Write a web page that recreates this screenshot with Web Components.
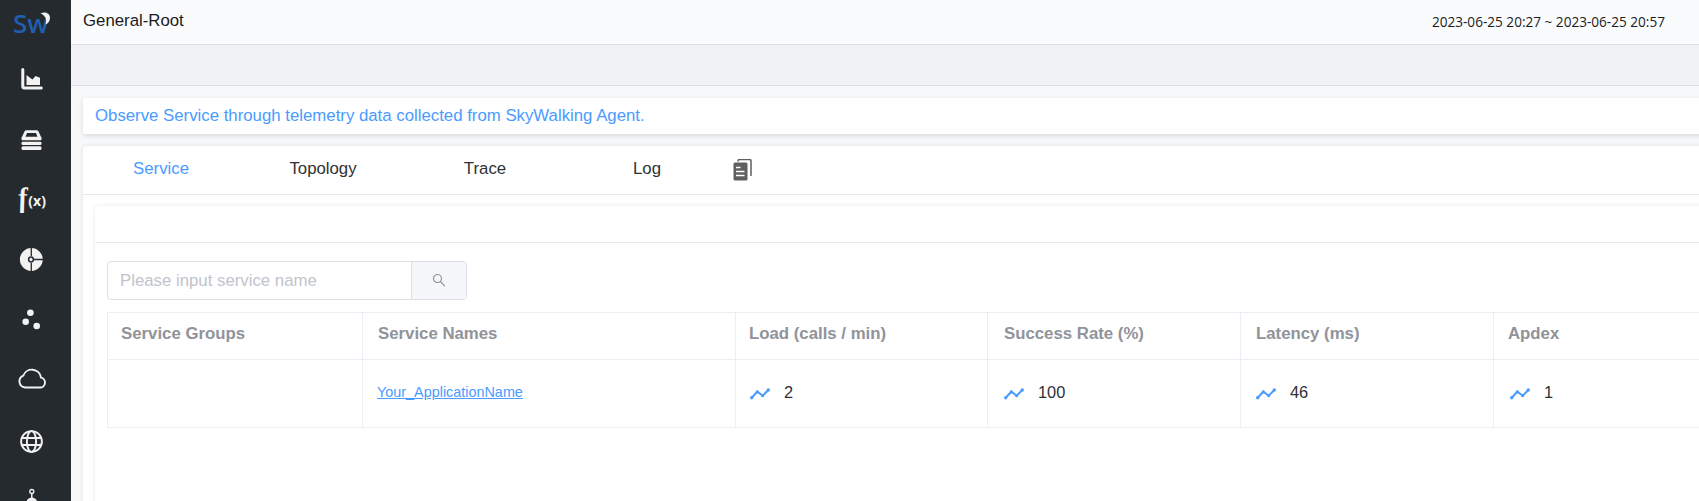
<!DOCTYPE html>
<html>
<head>
<meta charset="utf-8">
<style>
html, body { margin: 0; height: 100%; overflow: hidden; }
body { font: 16.8px "Liberation Sans", Arial, sans-serif; }
</style>
</head>
<body>
<sw-app>
  <sw-sidebar slot="nav"></sw-sidebar>
  <sw-header slot="header" title-text="General-Root" range="2023-06-25 20:27 ~ 2023-06-25 20:57"></sw-header>
  <sw-tip>Observe Service through telemetry data collected from SkyWalking Agent.</sw-tip>
  <sw-card>
    <sw-tabs></sw-tabs>
    <sw-panel>
      <sw-search placeholder="Please input service name"></sw-search>
      <sw-table></sw-table>
    </sw-panel>
  </sw-card>
</sw-app>

<script>
class SwApp extends HTMLElement{
  constructor(){
    super();
    this.attachShadow({ mode: 'open' });
    this.shadowRoot.innerHTML = `
    <style>
      :host{ display: flex; width: 1699px; height: 501px; overflow: hidden; background: #f7f8fa; }
      .main{ flex: 1; min-width: 0; display: flex; flex-direction: column; }
      .bar{ height: 40px; flex: none; background: #f0f2f5; border-bottom: 1px solid #dcdfe6; }
      .content{ width: 1700px; padding: 12px 0 0 12px; display: flex; flex-direction: column; gap: 12px; }
    </style>
    <slot name="nav"></slot>
    <div class="main">
      <slot name="header"></slot>
      <div class="bar"></div>
      <div class="content"><slot></slot></div>
    </div>`;
  }
}

const NAV_ICONS = [
  `<path d="M22.800 69.500v17a1.500 1.500 0 0 0 1.500 1.500h17" fill="none" stroke="#f2f2f2" stroke-width="3" stroke-linecap="round"/><path d="M26.500 85V75l3.500 2.800 2.500 1.700 3-3.500 4.500 1.800V85z" fill="#f2f2f2"/>`,
  `<path d="M21.500 138L24.500 131.500A2 2 0 0 1 26.300 130.300H36.700A2 2 0 0 1 38.500 131.500L41.500 138z" fill="#f2f2f2"/><path d="M25.500 136.800L27 133H36L37.500 136.800z" fill="#252a2f"/><rect x="21.500" y="137" width="20" height="3.200" rx="1" fill="#f2f2f2"/><rect x="21.500" y="141.700" width="20" height="3.300" rx="1.200" fill="#f2f2f2"/><rect x="21.500" y="146.300" width="20" height="3.700" rx="1.500" fill="#f2f2f2"/>`,
  ``,
  `<circle cx="31.300" cy="259.500" r="11.400" fill="#f2f2f2"/><path d="M31.300 247v9M31.300 263v9M33.500 259.500H44" stroke="#252a2f" stroke-width="1.300"/><circle cx="31" cy="259.500" r="2.400" fill="#f2f2f2" stroke="#252a2f" stroke-width="1.500"/>`,
  `<circle cx="30.400" cy="312.800" r="3.300" fill="#f2f2f2"/><circle cx="25.700" cy="321.800" r="3.300" fill="#f2f2f2"/><circle cx="36.700" cy="326" r="3.300" fill="#f2f2f2"/>`,
  `<path d="M25 387.500h15a5 5 0 0 0 1-9.900 9.200 9.200 0 0 0-17.700-2A6.200 6.200 0 0 0 25 387.500z" fill="none" stroke="#f2f2f2" stroke-width="1.900" stroke-linejoin="round"/>`,
  `<g fill="none" stroke="#f2f2f2" stroke-width="1.900"><circle cx="31.500" cy="441.500" r="10.400"/><ellipse cx="31.500" cy="441.500" rx="4.600" ry="10.400"/><path d="M21.500 438h20M21.500 445h20"/></g>`,
  `<circle cx="31.800" cy="491.500" r="2" fill="none" stroke="#f2f2f2" stroke-width="1.300"/><path d="M31.800 493.500v5" stroke="#f2f2f2" stroke-width="1.500"/><circle cx="31.800" cy="503" r="5.500" fill="#f2f2f2"/>`
];

class SwSidebar extends HTMLElement{
  constructor(){
    super();
    this.attachShadow({ mode: 'open' });
    this.shadowRoot.innerHTML = `
    <style>
      :host{ display: block; position: relative; width: 71px; flex: none; height: 501px; background: #252a2f; overflow: hidden; }
      .logo{ height: 46px; display: flex; align-items: center; padding-left: 13px; box-sizing: border-box; color: #1f5fae;
        font: 600 26px/1 "Open Sans", sans-serif; }
      svg.art{ position: absolute; left: 0; top: 0; }
      .fx{ position: absolute; left: 18px; top: 183px; color: #f2f2f2; font: italic 700 28px/30px "Liberation Serif", serif; display: flex; align-items: center; }
      .fx b{ font-weight: 700; transform: skewX(8deg); }
      .fx small{ font: 700 14px/1 "Open Sans", sans-serif; margin-left: 1px; margin-top: 6px; }
    </style>
    <div class="logo">Sw</div>
    <svg class="art" width="71" height="501" viewBox="0 0 71 501">
      <path d="M40.500 13.500c5-2.500 9.800-.2 9.500 4.800-.3 3.500-2.500 5.700-4.500 6.200 1.500-4.500.3-9-5-11z" fill="#f2f2f2"/>
      ${NAV_ICONS.join('')}
    </svg>
    <div class="fx"><b>f</b><small>(x)</small></div>`;
  }
}

class SwHeader extends HTMLElement{
  constructor(){
    super();
    this.attachShadow({ mode: 'open' });
  }
  connectedCallback(){
    this.shadowRoot.innerHTML = `
    <style>
      :host{ display: flex; flex: none; align-items: center; justify-content: space-between; box-sizing: border-box; height: 45px; padding: 0 34px 2px 12px; background: #fafbfc; border-bottom: 1px solid #dcdfe6; color: #1c1c1c; }
      .range{ font: 13.6px "Open Sans", sans-serif; }
    </style>
    <div>${this.getAttribute('title-text')}</div>
    <div class="range">${this.getAttribute('range')}</div>`;
  }
}

class SwTip extends HTMLElement{
  constructor(){
    super();
    this.attachShadow({ mode: 'open' });
    this.shadowRoot.innerHTML = `
    <style>
      :host{ display: block; box-sizing: border-box; height: 36px; line-height: 36px; padding-left: 12px; background: #fff; color: #4a9bff; border-radius: 2px; box-shadow: 0 2px 5px rgba(0,0,0,.12); }
    </style>
    <slot></slot>`;
  }
}

class SwCard extends HTMLElement{
  constructor(){
    super();
    this.attachShadow({ mode: 'open' });
    this.shadowRoot.innerHTML = `
    <style>
      :host{ display: block; background: #fff; border-radius: 4px; box-shadow: 0 0 4px rgba(0,0,0,.1); height: 360px; }
    </style>
    <slot></slot>`;
  }
}

class SwTabs extends HTMLElement{
  constructor(){
    super();
    this.attachShadow({ mode: 'open' });
    const tabs = ['Service', 'Topology', 'Trace', 'Log'];
    this.shadowRoot.innerHTML = `
    <style>
      :host{ display: flex; align-items: center; gap: 22px; box-sizing: border-box; height: 49px; padding: 0 0 2px 8px; border-bottom: 1px solid #e4e7ed; color: #303133; }
      .tab{ width: 140px; text-align: center; }
      .tab.on{ color: #4a9bff; }
      svg{ margin: 2px 0 0 -7px; }
    </style>
    ${tabs.map((t, i) => `<div class="tab ${i === 0 ? 'on' : ''}">${t}</div>`).join('')}
    <svg width="20" height="22" viewBox="0 0 20 22">
      <path d="M5 2V1.500A1.500 1.500 0 0 1 6.500 0h10A1.500 1.500 0 0 1 18 1.500v15" fill="none" stroke="#5f5f5f" stroke-width="1.500" transform="translate(1 .5)"/>
      <path d="M3 3.500A1.500 1.500 0 0 0 1.500 5v15A1.500 1.500 0 0 0 3 21.500h11a1.500 1.500 0 0 0 1.500-1.500V5A1.500 1.500 0 0 0 14 3.500z" fill="#5f5f5f"/>
      <path d="M4 8.500h4.500M4 12.500h8.500M4 16.500h8.500" stroke="#fff" stroke-width="1.500"/>
    </svg>`;
  }
}

class SwPanel extends HTMLElement{
  constructor(){
    super();
    this.attachShadow({ mode: 'open' });
    this.shadowRoot.innerHTML = `
    <style>
      :host{ display: block; margin: 11px 0 0 12px; background: #fff; border-radius: 4px; box-shadow: 0 0 4px rgba(0,0,0,.1); height: 300px; }
      .head{ height: 36px; border-bottom: 1px solid #e4e7ed; }
      .body{ padding: 18px 12px 0 12px; display: flex; flex-direction: column; gap: 12px; align-items: flex-start; }
    </style>
    <div class="head"></div>
    <div class="body"><slot></slot></div>`;
  }
}

class SwSearch extends HTMLElement{
  constructor(){
    super();
    this.attachShadow({ mode: 'open' });
  }
  connectedCallback(){
    this.shadowRoot.innerHTML = `
    <style>
      :host{ display: flex; box-sizing: border-box; width: 360px; height: 39px; border: 1px solid #dcdfe6; border-radius: 4px; overflow: hidden; background: #fff; }
      .ph{ flex: 1; display: flex; align-items: center; padding-left: 12px; color: #c0c4cc; }
      .btn{ width: 54px; display: flex; align-items: center; justify-content: center; background: #f5f7fa; border-left: 1px solid #dcdfe6; }
    </style>
    <div class="ph">${this.getAttribute('placeholder')}</div>
    <div class="btn">
      <svg width="14" height="14" viewBox="0 0 14 14" fill="none" stroke="#909399" stroke-width="1.200" style="margin:0 0 2px 0"><circle cx="5.500" cy="5.500" r="4"/><path d="M8.500 8.500l4 4.300" stroke-linecap="round"/></svg>
    </div>`;
  }
}

class SwTrend extends HTMLElement{
  constructor(){
    super();
    this.attachShadow({ mode: 'open' });
    this.shadowRoot.innerHTML = `
    <style>
      :host{ display: flex; align-items: center; gap: 13px; color: #303133; font-size: 16.4px; }
      svg{ flex: none; margin: 3px 0 0 1px; }
    </style>
    <svg width="21" height="14" viewBox="0 0 21 14" fill="none" stroke="#4a9bff" stroke-width="2">
      <path d="M1.700 10.700L7.300 4.700l5.400 4 5.600-5.700"/>
      <g fill="#4a9bff" stroke="none"><circle cx="1.700" cy="10.700" r="1.700"/><circle cx="7.300" cy="4.700" r="1.500"/><circle cx="12.700" cy="8.700" r="1.500"/><circle cx="18.300" cy="3" r="1.700"/></g>
    </svg>
    <slot></slot>`;
  }
}

class SwTable extends HTMLElement{
  constructor(){
    super();
    this.attachShadow({ mode: 'open' });
    const heads = ['Service Groups', 'Service Names', 'Load (calls / min)', 'Success Rate (%)', 'Latency (ms)', 'Apdex'];
    const values = ['2', '100', '46', '1'];
    const pads = [13, 15, 13, 16, 15, 14];
    const cellPads = [13, 15, 14, 15];
    this.shadowRoot.innerHTML = `
    <style>
      :host{ display: grid; grid-template-columns: 255px 373px 252px 253px 253px 253px; grid-template-rows: 47px 68px; border-top: 1px solid #ebeef5; border-left: 1px solid #ebeef5; }
      .c{ display: flex; align-items: center; box-sizing: border-box; border-right: 1px solid #ebeef5; border-bottom: 1px solid #ebeef5; padding-bottom: 3px; }
      .h{ font-weight: 700; color: #909399; padding-bottom: 4px; }
      a{ color: #4a9bff; font-size: 14.4px; text-decoration: underline; margin-left: -1px; }
    </style>
    ${heads.map((h, i) => `<div class="c h" style="padding-left:${pads[i]}px">${h}</div>`).join('')}
    <div class="c"></div>
    <div class="c" style="padding-left:${pads[1]}px"><a href="#">Your_ApplicationName</a></div>
    ${values.map((v, i) => `<div class="c" style="padding-left:${cellPads[i]}px"><sw-trend>${v}</sw-trend></div>`).join('')}`;
  }
}

customElements.define('sw-app', SwApp);
customElements.define('sw-sidebar', SwSidebar);
customElements.define('sw-header', SwHeader);
customElements.define('sw-tip', SwTip);
customElements.define('sw-card', SwCard);
customElements.define('sw-tabs', SwTabs);
customElements.define('sw-panel', SwPanel);
customElements.define('sw-search', SwSearch);
customElements.define('sw-trend', SwTrend);
customElements.define('sw-table', SwTable);
</script>
</body>
</html>
